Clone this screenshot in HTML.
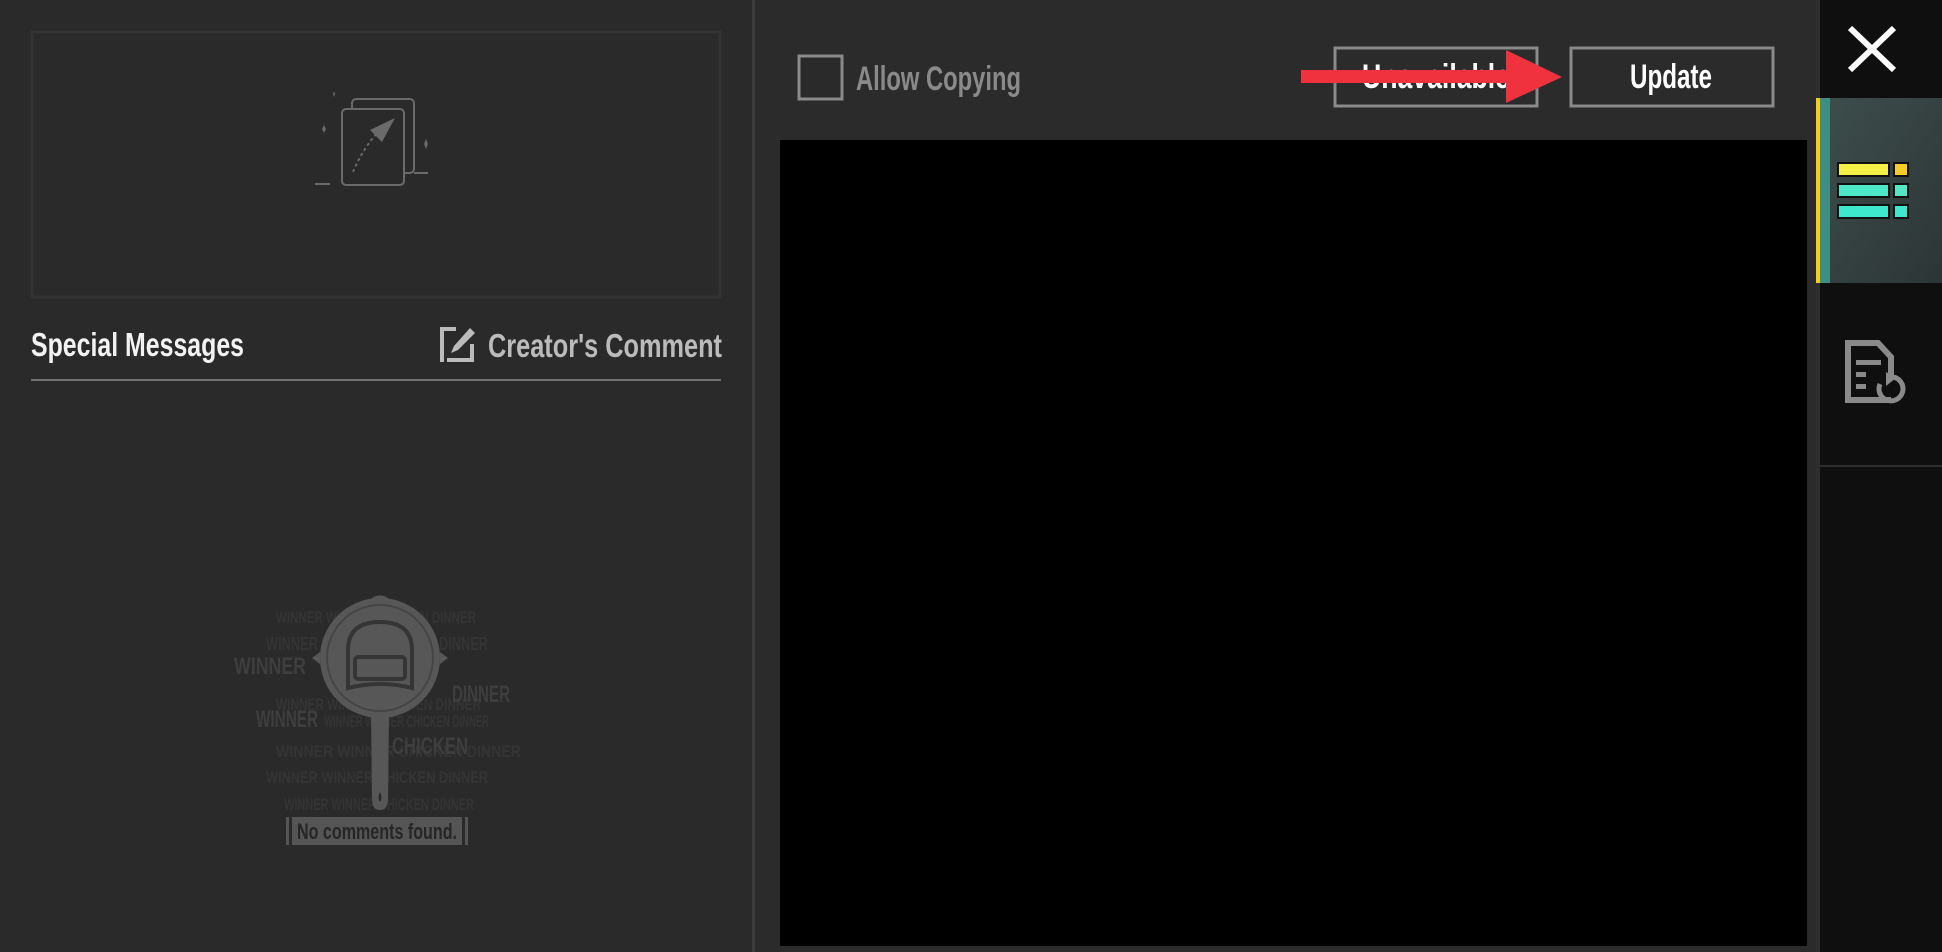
<!DOCTYPE html>
<html><head><meta charset="utf-8"><style>
html,body{margin:0;padding:0;width:1942px;height:952px;overflow:hidden;background:#2a2a2a}
svg{display:block}
text{font-family:"Liberation Sans Narrow","Liberation Sans",sans-serif;font-weight:bold}
</style></head><body>
<svg width="1942" height="952" viewBox="0 0 1942 952" xmlns="http://www.w3.org/2000/svg">
<rect width="1942" height="952" fill="#2a2a2a"/>
<rect x="32" y="32" width="688" height="265" fill="none" stroke="#333" stroke-width="3"/>
<g fill="none" stroke="#6a6a6a" stroke-width="2">
<rect x="352" y="99" width="62" height="74" rx="4"/>
<rect x="342" y="109" width="62" height="76" rx="4" fill="#2a2a2a"/>
<line x1="315" y1="184" x2="330" y2="184"/><line x1="414" y1="173" x2="428" y2="173"/>
<path d="M353 172 Q362 150 378 132" stroke-dasharray="3 3"/>
</g>
<path d="M370 130 L395 118 L382 142 Z" fill="#6a6a6a"/>
<path d="M322 129 l2 -4 2 4 -2 4z M424 144 l2 -5 2 5 -2 5z M333 94 l1 -3 1 3 -1 3z" fill="#6a6a6a"/>
<text x="31" y="356" font-size="33" fill="#f2f2f2" textLength="213" lengthAdjust="spacingAndGlyphs">Special Messages</text>
<g fill="#bbb">
<rect x="440" y="327" width="4" height="35"/>
<rect x="440" y="327" width="16" height="4"/>
<rect x="447" y="358" width="27" height="4"/>
<rect x="470" y="344" width="4" height="18"/>
<path d="M470 328 L475 333 L458 350 L451 353 L454 346 Z"/>
</g>
<text x="488" y="357" font-size="33" fill="#bbb" textLength="234" lengthAdjust="spacingAndGlyphs">Creator's Comment</text>
<rect x="31" y="379" width="690" height="2" fill="#707070"/>
<g fill="#343434" font-size="17">
<text x="276" y="623" textLength="200" lengthAdjust="spacingAndGlyphs">WINNER WINNER CHICKEN DINNER</text>
<text x="266" y="650" font-size="18" textLength="222" lengthAdjust="spacingAndGlyphs">WINNER WINNER CHICKEN DINNER</text>
<text x="276" y="710" textLength="205" lengthAdjust="spacingAndGlyphs">WINNER WINNER CHICKEN DINNER</text>
<text x="324" y="727" textLength="165" lengthAdjust="spacingAndGlyphs">WINNER WINNER CHICKEN DINNER</text>
<text x="276" y="757" textLength="245" lengthAdjust="spacingAndGlyphs">WINNER WINNER CHICKEN DINNER</text>
<text x="266" y="783" textLength="222" lengthAdjust="spacingAndGlyphs">WINNER WINNER CHICKEN DINNER</text>
<text x="284" y="810" textLength="190" lengthAdjust="spacingAndGlyphs">WINNER WINNER CHICKEN DINNER</text>
</g>
<g fill="#3e3e3e" font-size="24">
<text x="234" y="674" textLength="72" lengthAdjust="spacingAndGlyphs">WINNER</text>
<text x="256" y="727" textLength="62" lengthAdjust="spacingAndGlyphs">WINNER</text>
<text x="452" y="702" textLength="58" lengthAdjust="spacingAndGlyphs">DINNER</text>
<text x="392" y="754" textLength="76" lengthAdjust="spacingAndGlyphs">CHICKEN</text>
</g>
<g fill="#575757">
<circle cx="380" cy="658" r="60"/>
<path d="M368 608 L372 598 Q380 593 388 598 L392 608Z"/>
<path d="M320 664 l-8 -6 8 -6z M440 664 l8 -6 -8 -6z"/>
<path d="M371 712 L389 712 L388 798 Q388 810 380 810 Q372 810 372 798 Z"/>
</g>
<circle cx="380" cy="658" r="53" fill="none" stroke="#454545" stroke-width="2"/>
<path d="M348 688 V650 Q348 622 380 622 Q412 622 412 650 V688 Q380 680 348 688Z" fill="none" stroke="#353535" stroke-width="4"/>
<rect x="355" y="657" width="50" height="22" rx="3" fill="none" stroke="#353535" stroke-width="4"/>
<path d="M380 792 q-3 6 0 10 q3 -4 0 -10z" fill="#2a2a2a"/>
<rect x="286" y="817" width="3" height="28" fill="#555"/><rect x="465" y="817" width="3" height="28" fill="#555"/>
<rect x="292" y="817" width="170" height="28" fill="#555"/>
<text x="297" y="839" font-size="22" fill="#262626" textLength="160" lengthAdjust="spacingAndGlyphs">No comments found.</text>
<rect x="752" y="0" width="3" height="952" fill="#3c3c3c"/>
<rect x="755" y="0" width="1061" height="952" fill="#2b2b2b"/>
<rect x="799" y="56" width="43" height="43" fill="#2a2a2a" stroke="#8a8a8a" stroke-width="3"/>
<text x="856" y="90" font-size="34" fill="#8a8a8a" textLength="165" lengthAdjust="spacingAndGlyphs">Allow Copying</text>
<rect x="1335" y="48" width="202" height="58" fill="#2b2b2b" stroke="#8a8a8a" stroke-width="3"/>
<text x="1362" y="88" font-size="34" fill="#fff" textLength="148" lengthAdjust="spacingAndGlyphs">Unavailable</text>
<rect x="1571" y="48" width="202" height="58" fill="#2b2b2b" stroke="#8a8a8a" stroke-width="3"/>
<text x="1630" y="88" font-size="34" fill="#fff" textLength="82" lengthAdjust="spacingAndGlyphs">Update</text>
<rect x="1301" y="70" width="206" height="13" fill="#f0323f"/>
<path d="M1506 50 L1562 77 L1506 103 Z" fill="#f0323f"/>
<rect x="780" y="140" width="1027" height="806" fill="#000"/>
<rect x="1816" y="0" width="126" height="952" fill="#0f0f0f"/>
<rect x="1816" y="0" width="4" height="952" fill="#2e2e2e"/>
<path d="M1850 28 L1894 70 M1894 28 L1850 70" stroke="#fff" stroke-width="6"/>
<defs><linearGradient id="g" x1="0" y1="0" x2="1" y2="1"><stop offset="0" stop-color="#3e4f4d"/><stop offset="1" stop-color="#2c3535"/></linearGradient></defs>
<rect x="1816" y="98" width="126" height="185" fill="url(#g)"/>
<rect x="1816" y="98" width="4" height="185" fill="#f2cf1a"/>
<rect x="1820" y="98" width="10" height="185" fill="#3f8e82"/>
<g stroke="#111" stroke-width="2">
<rect x="1838" y="163" width="51" height="13" fill="#f5f045"/><rect x="1894" y="163" width="14" height="13" fill="#f5cc2a"/>
<rect x="1838" y="184" width="51" height="13" fill="#4de8c8"/><rect x="1894" y="184" width="14" height="13" fill="#55e6c6"/>
<rect x="1838" y="205" width="51" height="13" fill="#3ee8cc"/><rect x="1894" y="205" width="14" height="13" fill="#3ee8cc"/>
</g>
<g fill="none" stroke="#8a8a8a" stroke-width="6">
<path d="M1891 400 H1848 V343 H1878 L1891 357 V377"/>
</g>
<g fill="#8a8a8a"><rect x="1856" y="360" width="25" height="5"/><rect x="1856" y="372" width="10" height="5"/><rect x="1856" y="384" width="10" height="5"/></g>
<path d="M1880 384 A12 12 0 1 0 1893 377" fill="none" stroke="#8a8a8a" stroke-width="5"/>
<path d="M1886 372 L1896 378 L1886 386Z" fill="#8a8a8a"/>
<rect x="1820" y="465" width="122" height="2" fill="#2e2e2e"/>
</svg>
</body></html>
